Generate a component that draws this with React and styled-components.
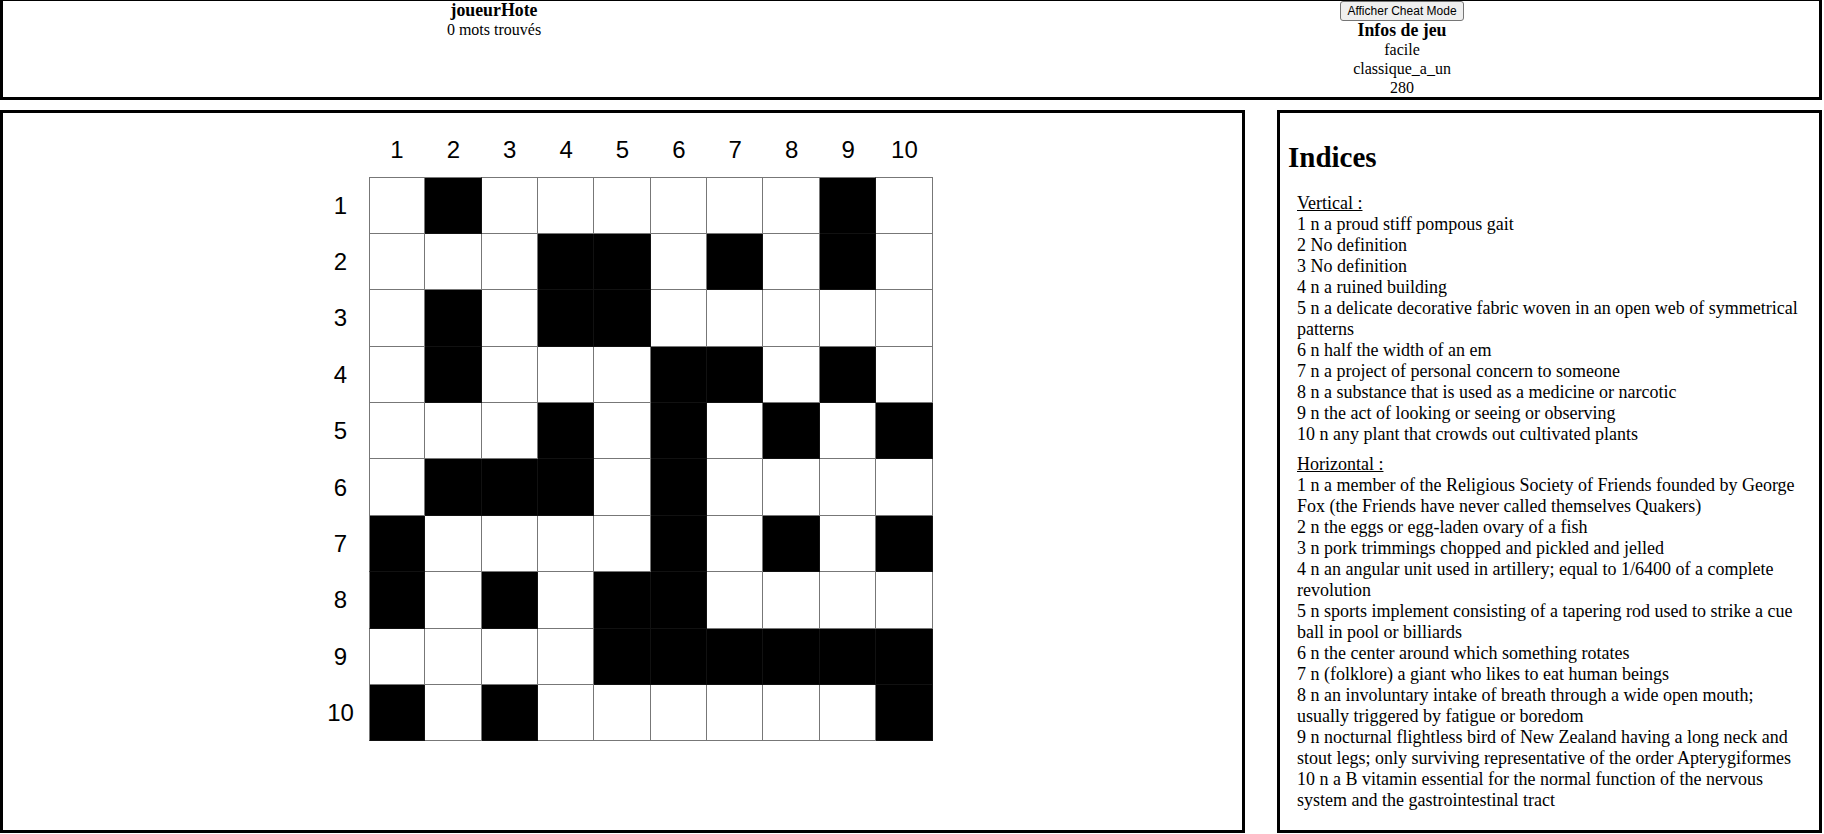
import React from "react";
import styled, { createGlobalStyle } from "styled-components";

const GlobalStyle = createGlobalStyle`
  html, body { margin: 0; padding: 0; background: #fff; }
  body {
    font-family: "Liberation Serif", "Times New Roman", serif;
    color: #000;
  }
`;

const Page = styled.div`
  width: 1822px;
  display: flex;
  flex-direction: column;
  gap: 10px;
`;

const Header = styled.header`
  box-sizing: border-box;
  height: 100px;
  border: 3px solid #000;
  border-top-width: 1px;
  display: grid;
  grid-template-columns: 982px 1fr;
  font-size: 16px;
  line-height: 19px;
`;

const HeaderColumn = styled.div`
  display: flex;
  flex-direction: column;
  align-items: center;
  text-align: center;
`;

const Line = styled.div`
  font-weight: ${(p) => (p.$bold ? "bold" : "normal")};
  font-size: ${(p) => (p.$bold ? "17.8px" : "16px")};
  line-height: ${(p) => (p.$bold ? "18px" : "19px")};
  margin-bottom: ${(p) => (p.$bold ? "1px" : "0")};
`;

const CheatButton = styled.button`
  box-sizing: border-box;
  height: 20px;
  padding: 0 6px;
  font: 12px "Liberation Sans", Arial, sans-serif;
  color: #000;
  background: #efefef;
  border: 1px solid #767676;
  border-radius: 3px;
  cursor: pointer;
`;

const Main = styled.div`
  display: flex;
  gap: 32px;
  height: 723px;
`;

const BoardPanel = styled.section`
  box-sizing: border-box;
  width: 1245px;
  flex: none;
  border: 3px solid #000;
  padding-top: 9px;
  display: flex;
  justify-content: center;
  align-items: flex-start;
`;

const Board = styled.div`
  display: grid;
  grid-template-columns: repeat(11, 56.4px);
  grid-template-rows: 55.4px;
  grid-auto-rows: 56.4px;
`;

const Label = styled.div`
  display: flex;
  align-items: center;
  justify-content: center;
  font: 24px "Liberation Sans", Arial, sans-serif;
  color: #000;
`;

const Square = styled.div`
  box-sizing: border-box;
  background: ${(p) => (p.$filled ? "#000" : "#fff")};
  border-right: 1px solid ${(p) => (p.$filled ? "#111" : "#777")};
  border-bottom: 1px solid ${(p) => (p.$filled ? "#111" : "#777")};
  border-top: ${(p) => (p.$top ? "1px solid #777" : "none")};
  border-left: ${(p) => (p.$left ? "1px solid #777" : "none")};
`;

const CluePanel = styled.aside`
  box-sizing: border-box;
  flex: 1;
  border: 3px solid #000;
  padding: 0 8px;
  font-size: 18px;
  line-height: 21px;
`;

const CluesTitle = styled.h2`
  margin: 28px 0 19px;
  font-size: 29px;
  line-height: 33px;
  font-weight: bold;
`;

const ClueGroup = styled.div`
  margin: 0 11px 9px 9px;
`;

const GroupTitle = styled.div`
  text-decoration: underline;
`;

const Clue = styled.div``;

const GRID = [
  "0100000010",
  "0001101010",
  "0101100000",
  "0100011010",
  "0001010101",
  "0111010000",
  "1000010101",
  "1010110000",
  "0000111111",
  "1010000001",
];

const VERTICAL = [
  "1 n a proud stiff pompous gait",
  "2 No definition",
  "3 No definition",
  "4 n a ruined building",
  "5 n a delicate decorative fabric woven in an open web of symmetrical patterns",
  "6 n half the width of an em",
  "7 n a project of personal concern to someone",
  "8 n a substance that is used as a medicine or narcotic",
  "9 n the act of looking or seeing or observing",
  "10 n any plant that crowds out cultivated plants",
];

const HORIZONTAL = [
  "1 n a member of the Religious Society of Friends founded by George Fox (the Friends have never called themselves Quakers)",
  "2 n the eggs or egg-laden ovary of a fish",
  "3 n pork trimmings chopped and pickled and jelled",
  "4 n an angular unit used in artillery; equal to 1/6400 of a complete revolution",
  "5 n sports implement consisting of a tapering rod used to strike a cue ball in pool or billiards",
  "6 n the center around which something rotates",
  "7 n (folklore) a giant who likes to eat human beings",
  "8 n an involuntary intake of breath through a wide open mouth; usually triggered by fatigue or boredom",
  "9 n nocturnal flightless bird of New Zealand having a long neck and stout legs; only surviving representative of the order Apterygiformes",
  "10 n a B vitamin essential for the normal function of the nervous system and the gastrointestinal tract",
];

const nums = Array.from({ length: 10 }, (_, i) => i + 1);

export default function App() {
  return (
    <>
      <GlobalStyle />
      <Page>
        <Header>
          <HeaderColumn>
            <Line $bold>joueurHote</Line>
            <Line>0 mots trouvés</Line>
          </HeaderColumn>
          <HeaderColumn>
            <CheatButton type="button">Afficher Cheat Mode</CheatButton>
            <Line $bold>Infos de jeu</Line>
            <Line>facile</Line>
            <Line>classique_a_un</Line>
            <Line>280</Line>
          </HeaderColumn>
        </Header>
        <Main>
          <BoardPanel>
            <Board>
              <Label />
              {nums.map((n) => (
                <Label key={`c${n}`}>{n}</Label>
              ))}
              {GRID.map((row, r) => (
                <React.Fragment key={`r${r}`}>
                  <Label>{r + 1}</Label>
                  {row.split("").map((v, c) => (
                    <Square
                      key={`${r}-${c}`}
                      $filled={v === "1"}
                      $top={r === 0}
                      $left={c === 0}
                    />
                  ))}
                </React.Fragment>
              ))}
            </Board>
          </BoardPanel>
          <CluePanel>
            <CluesTitle>Indices</CluesTitle>
            <ClueGroup>
              <GroupTitle>Vertical :</GroupTitle>
              {VERTICAL.map((t) => (
                <Clue key={t}>{t}</Clue>
              ))}
            </ClueGroup>
            <ClueGroup>
              <GroupTitle>Horizontal :</GroupTitle>
              {HORIZONTAL.map((t) => (
                <Clue key={t}>{t}</Clue>
              ))}
            </ClueGroup>
          </CluePanel>
        </Main>
      </Page>
    </>
  );
}
